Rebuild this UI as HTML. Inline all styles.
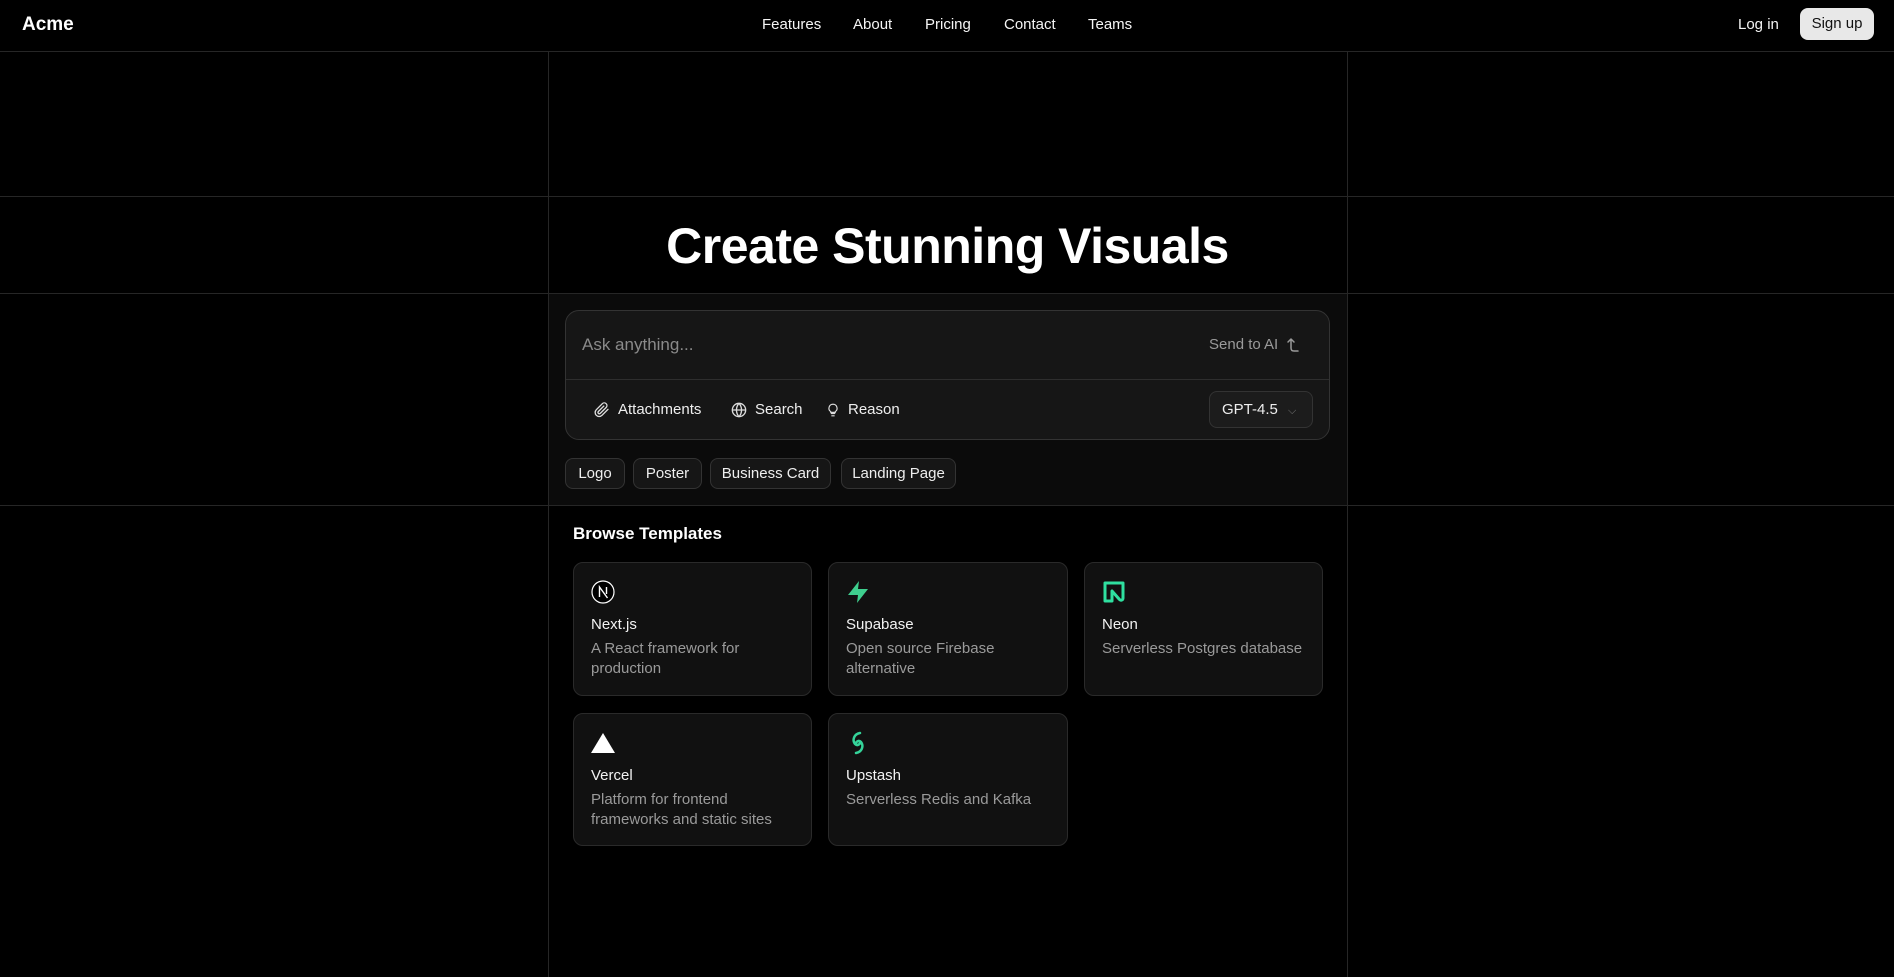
<!DOCTYPE html>
<html><head><meta charset="utf-8"><style>
*{box-sizing:border-box;margin:0;padding:0}
body{width:1894px;height:977px;background:#000;color:#fff;font-family:"Liberation Sans",sans-serif;position:relative;overflow:hidden}
.a{position:absolute}
.hl{position:absolute;left:0;width:1894px;height:1px;background:#262626}
.vl{position:absolute;top:51px;width:1px;height:926px;background:#262626}
.nav{font-size:15px;top:16px;color:#f5f5f5}
.chip{position:absolute;top:458px;height:31px;border:1px solid #333;border-radius:8px;background:#161616;font-size:15px;line-height:29px;text-align:center;color:#eee}
.card{position:absolute;border:1px solid #2a2a2a;border-radius:10px;background:#111;padding:0 17px}
.card svg{position:absolute;left:17px;top:17px}
.card .t{position:absolute;left:17px;top:53px;font-size:15px;color:#f2f2f2}
.card .d{position:absolute;left:17px;top:76px;width:210px;font-size:15px;line-height:20px;color:#9a9a9a}
.tool{position:absolute;top:401px;font-size:15px;color:#eee;display:flex;align-items:center;gap:8px}
</style></head><body>
<div class="a" style="left:22px;top:14px;font-size:19px;font-weight:bold">Acme</div>
<div class="a nav" style="left:762px">Features</div>
<div class="a nav" style="left:853px">About</div>
<div class="a nav" style="left:925px">Pricing</div>
<div class="a nav" style="left:1004px">Contact</div>
<div class="a nav" style="left:1088px">Teams</div>
<div class="a nav" style="left:1738px">Log in</div>
<div class="a" style="left:1800px;top:8px;width:74px;height:32px;border-radius:8px;background:#e8e8e8;color:#111;font-size:15px;line-height:32px;text-align:center">Sign up</div>

<div class="a" style="left:548px;top:293px;width:799px;height:212px;background:#0b0b0b"></div>
<div class="hl" style="top:51px"></div>
<div class="hl" style="top:196px"></div>
<div class="hl" style="top:293px"></div>
<div class="hl" style="top:505px"></div>
<div class="vl" style="left:548px"></div>
<div class="vl" style="left:1347px"></div>

<div class="a" style="left:548px;top:217px;width:799px;text-align:center;font-size:50px;font-weight:bold;letter-spacing:-0.5px">Create Stunning Visuals</div>

<div class="a" style="left:565px;top:310px;width:765px;height:130px;border:1px solid #333;border-radius:14px;background:#161616"></div>
<div class="a" style="left:566px;top:379px;width:763px;height:1px;background:#2e2e2e"></div>
<div class="a" style="left:582px;top:335px;font-size:17px;color:#8a8a8a">Ask anything...</div>
<div class="a" style="left:1209px;top:336px;font-size:15px;color:#9a9a9a;display:flex;align-items:center;gap:8px">Send to AI <svg width="14" height="16" viewBox="0 0 14 16" fill="none" stroke="#9a9a9a" stroke-width="1.5" stroke-linecap="round"><path d="M2 5l3-3 3 3M5 2v9q0 3 3 3h4"/></svg></div>
<div class="tool" style="left:594px"><svg width="16" height="16" viewBox="0 0 24 24" fill="none" stroke="#ddd" stroke-width="2" stroke-linecap="round"><path d="M21 11l-9 9a6 6 0 0 1-8.5-8.5l9-9a4 4 0 0 1 5.7 5.7l-9 9a2 2 0 0 1-2.8-2.8l8.3-8.3"/></svg>Attachments</div>
<div class="tool" style="left:731px"><svg width="16" height="16" viewBox="0 0 24 24" fill="none" stroke="#ddd" stroke-width="2"><circle cx="12" cy="12" r="10"/><path d="M2 12h20M12 2a15 15 0 0 1 0 20M12 2a15 15 0 0 0 0 20"/></svg>Search</div>
<div class="tool" style="left:826px"><svg width="14" height="16" viewBox="0 0 24 24" fill="none" stroke="#ddd" stroke-width="2" stroke-linecap="round"><path d="M9 18h6M10 22h4M12 2a7 7 0 0 0-4 12.7V16h8v-1.3A7 7 0 0 0 12 2z"/></svg>Reason</div>
<div class="a" style="left:1209px;top:391px;width:104px;height:37px;border:1px solid #333;border-radius:8px;background:#1c1c1c;font-size:15px;line-height:35px;padding-left:12px;color:#eee">GPT-4.5 <span style="color:#777;font-size:11px;margin-left:6px">&#x2335;</span></div>

<div class="chip" style="left:565px;width:60px">Logo</div>
<div class="chip" style="left:633px;width:69px">Poster</div>
<div class="chip" style="left:710px;width:121px">Business Card</div>
<div class="chip" style="left:841px;width:115px">Landing Page</div>

<div class="a" style="left:573px;top:524px;font-size:17px;font-weight:bold">Browse Templates</div>

<div class="card" style="left:573px;top:562px;width:239px;height:134px">
<svg width="24" height="24" viewBox="0 0 24 24"><circle cx="12" cy="12" r="11" fill="#000" stroke="#fff" stroke-width="1.2"/><path d="M8.5 17V7l8 11M15.5 7v7" stroke="#fff" stroke-width="1.4" fill="none"/></svg>
<div class="t">Next.js</div><div class="d">A React framework for production</div></div>
<div class="card" style="left:828px;top:562px;width:240px;height:134px">
<svg width="24" height="24" viewBox="0 0 24 24"><path d="M13 1L2 15h10l-1 8 11-14H12z" fill="#3ecf8e"/></svg>
<div class="t">Supabase</div><div class="d">Open source Firebase alternative</div></div>
<div class="card" style="left:1084px;top:562px;width:239px;height:134px">
<svg width="24" height="24" viewBox="0 0 24 24"><path d="M3 21V3h18v15c0 2-2 3-3.5 1.5L10 11v10z" fill="none" stroke="#2fe0a0" stroke-width="3" stroke-linejoin="round"/></svg>
<div class="t">Neon</div><div class="d">Serverless Postgres database</div></div>
<div class="card" style="left:573px;top:713px;width:239px;height:133px">
<svg width="24" height="24" viewBox="0 0 24 24"><path d="M12 2L24 22H0z" fill="#fff"/></svg>
<div class="t">Vercel</div><div class="d">Platform for frontend frameworks and static sites</div></div>
<div class="card" style="left:828px;top:713px;width:240px;height:133px">
<svg width="24" height="24" viewBox="0 0 24 24" fill="none" stroke="#34d399" stroke-width="2.5" stroke-linecap="round"><path d="M14 2C8 3 6 9 9 13M10 22c6-1 8-7 5-11M9 13c2 2 5 1 5-2M15 11c-2-2-5-1-5 2"/></svg>
<div class="t">Upstash</div><div class="d">Serverless Redis and Kafka</div></div>
</body></html>
